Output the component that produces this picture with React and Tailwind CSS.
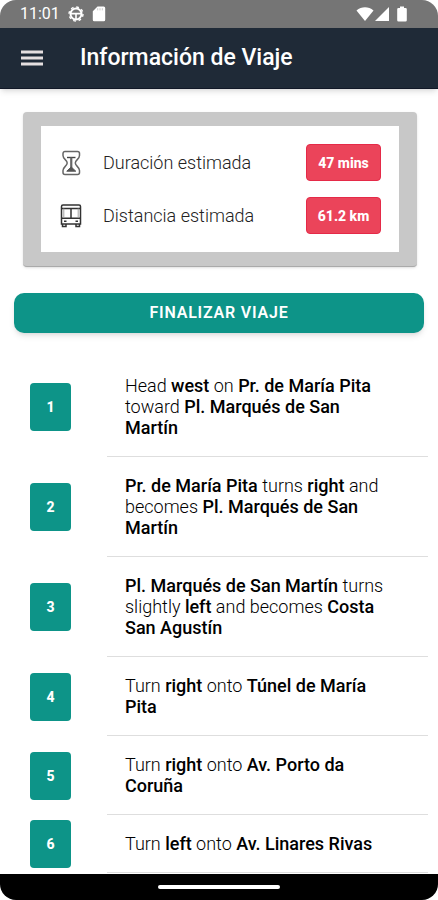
import React from "react";

const steps = [
  [["Head "], ["west", true], [" on "], ["Pr. de María Pita", true], [" toward "], ["Pl. Marqués de San Martín", true]],
  [["Pr. de María Pita", true], [" turns "], ["right", true], [" and becomes "], ["Pl. Marqués de San Martín", true]],
  [["Pl. Marqués de San Martín", true], [" turns slightly "], ["left", true], [" and becomes "], ["Costa San Agustín", true]],
  [["Turn "], ["right", true], [" onto "], ["Túnel de María Pita", true]],
  [["Turn "], ["right", true], [" onto "], ["Av. Porto da Coruña", true]],
  [["Turn "], ["left", true], [" onto "], ["Av. Linares Rivas", true]],
];

function HourglassIcon() {
  return (
    <svg viewBox="0 0 24 26" className="w-6 h-[26px]" fill="none" stroke="#666" strokeWidth="1.5" strokeLinejoin="round" aria-hidden="true">
      <path d="M6 1.500h12.500a2 2 0 0 1 2 2v2c0 3.600-4.200 4.500-4.200 7.500s4.200 3.900 4.200 7.500v2a2 2 0 0 1-2 2H6a2 2 0 0 1-2-2v-2c0-3.600 4.200-4.500 4.200-7.500S4 9.100 4 5.500v-2a2 2 0 0 1 2-2z" />
      <path d="M8 7.500h8.500" stroke="#444" strokeWidth="1.400" />
      <path d="M12.250 7.500V19" stroke="#666" strokeWidth="2.200" />
      <path d="M12.250 17l4.500 4.200h-9z" fill="#555" stroke="#555" strokeWidth="1" />
    </svg>
  );
}

function BusIcon() {
  return (
    <svg viewBox="0 0 24 26" className="w-6 h-[26px]" fill="none" stroke="#333" strokeWidth="1.500" aria-hidden="true">
      <path d="M2.500 21V3.500A1.500 1.500 0 0 1 4 2h16a1.500 1.500 0 0 1 1.500 1.500V21z" />
      <path d="M2.500 5.500h19M12 5.500v9.500M2.500 15.200h19" />
      <path d="M4.800 5.500v9.500M19.200 5.500v9.500" stroke="#999" strokeWidth="0.900" />
      <path d="M5 18.300h2.500M16.500 18.300H19" />
      <path d="M3.500 21v2.500H7V21M17 21v2.500h3.500V21" />
    </svg>
  );
}

function StatusBar() {
  return (
    <div className="flex items-center h-7 px-5 bg-[#757575] text-white rounded-t-2xl">
      <span className="text-base">11:01</span>
      <svg viewBox="0 0 16 16" className="w-4 h-4 ml-2" fill="none" stroke="currentColor" aria-hidden="true">
        <circle cx="8" cy="8" r="5.500" strokeWidth="2" />
        <circle cx="8" cy="8" r="7" strokeWidth="1.400" strokeDasharray="2.750 2.750" />
        <path d="M3 7.600h10M8 8v5" strokeWidth="1.600" />
      </svg>
      <svg viewBox="0 0 14 16" className="w-[14px] h-4 ml-2" fill="currentColor" aria-hidden="true">
        <path d="M5.500.500h6.200a1.500 1.500 0 0 1 1.500 1.500v11.800a1.500 1.500 0 0 1-1.500 1.500H2.300a1.500 1.500 0 0 1-1.500-1.500V5.200z" />
        <path d="M5.700 2.200v2.200M8 2.200v2.200M10.300 2.200v2.200" stroke="#c5c5c5" strokeWidth="0.900" />
      </svg>
      <div className="flex items-center ml-auto mr-2">
        <svg viewBox="0 0 18 16" className="w-[18px] h-4" fill="currentColor" aria-hidden="true">
          <path d="M9 15 .500 4.500C5.500.300 12.500.300 17.500 4.500z" />
        </svg>
        <svg viewBox="0 0 16 16" className="w-4 h-4" fill="currentColor" aria-hidden="true">
          <path d="M15 1v14H1z" />
        </svg>
        <svg viewBox="0 0 16 16" className="w-4 h-4 ml-1" fill="currentColor" aria-hidden="true">
          <path d="M6 .500h4V2h1.500A1.300 1.300 0 0 1 12.800 3.300v11a1.300 1.300 0 0 1-1.300 1.300h-7a1.300 1.300 0 0 1-1.300-1.300v-11A1.300 1.300 0 0 1 4.500 2H6z" />
        </svg>
      </div>
    </div>
  );
}

function SummaryRow({ icon, label, value }) {
  return (
    <div className="flex items-center">
      {icon}
      <span className="ml-5 text-lg leading-6 font-light text-[#222]">{label}</span>
      <span className="ml-auto w-[75px] h-[37px] flex items-center justify-center rounded bg-[#eb445a] border border-[#e52a48] text-white text-sm font-extrabold">
        {value}
      </span>
    </div>
  );
}

function App() {
  return (
    <div className="min-h-screen flex flex-col bg-white font-['Roboto',sans-serif]">
      <StatusBar />

      <header className="flex items-center h-[61px] px-5 bg-[#1f2a37] border-b border-[#111827] shadow-md">
        <button type="button" aria-label="Menú" className="w-6 h-6 flex items-center justify-center text-[#e5dfe0]">
          <svg viewBox="0 0 22 16" className="w-[22px] h-4" stroke="currentColor" strokeWidth="3" aria-hidden="true">
            <path d="M0 2h22M0 8h22M0 14h22" />
          </svg>
        </button>
        <h1 className="ml-9 text-[23px] font-medium text-white">Información de Viaje</h1>
      </header>

      <main className="flex flex-col">
        <section className="ml-[23px] mr-[21px] mt-[23px] px-[18px] py-[14px] rounded bg-[#c8c8c8] shadow-sm border-b border-[#aaa]">
          <div className="flex flex-col gap-4 bg-white p-[18px]">
            <SummaryRow icon={<HourglassIcon />} label="Duración estimada" value="47 mins" />
            <SummaryRow icon={<BusIcon />} label="Distancia estimada" value="61.2 km" />
          </div>
        </section>

        <button
          type="button"
          className="mx-[14px] mt-[26px] h-10 rounded-[10px] bg-[#0d9488] text-white text-base font-semibold tracking-wider uppercase shadow-md"
        >
          Finalizar viaje
        </button>

        <ol className="mt-6">
          {steps.map((step, index) => (
            <li key={index} className="flex items-center pl-[30px] pr-[10px]">
              <span className="w-[41px] h-12 shrink-0 flex items-center justify-center rounded bg-[#0d9488] text-white text-sm font-extrabold">
                {index + 1}
              </span>
              <div className="ml-9 flex-1 pl-[18px] pr-9 py-[18px] border-b border-[#dedede]">
                <p className="text-lg leading-[21px] font-light text-black">
                  {step.map(([text, strong], i) =>
                    strong ? (
                      <b key={i} className="font-medium">{text}</b>
                    ) : (
                      <React.Fragment key={i}>{text}</React.Fragment>
                    )
                  )}
                </p>
              </div>
            </li>
          ))}
        </ol>
      </main>

      {/* Android gesture bar */}
      <div className="mt-auto h-[26px] flex justify-center items-center bg-black rounded-b-2xl">
        <div className="w-[122px] h-1 rounded-full bg-white"></div>
      </div>
    </div>
  );
}

export default App;
